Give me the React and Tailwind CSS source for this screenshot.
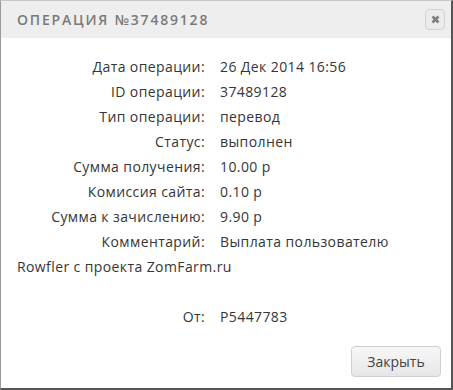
import React from "react";

const rows = [
  ["Дата операции:", "26 Дек 2014 16:56"],
  ["ID операции:", "37489128"],
  ["Тип операции:", "перевод"],
  ["Статус:", "выполнен"],
  ["Сумма получения:", "10.00 р"],
  ["Комиссия сайта:", "0.10 р"],
  ["Сумма к зачислению:", "9.90 р"],
  ["Комментарий:", "Выплата пользователю"],
];

export default function App() {
  return (
    <div
      className="w-[453px] h-[390px] bg-white border-l border-l-[#9a9a9a] border-t border-t-[#c8c8c8] border-r-2 border-r-[#555] border-b-2 border-b-[#555] flex flex-col text-[#333]"
      style={{ fontFamily: '"Open Sans", "Liberation Sans", sans-serif' }}
    >
      <div className="h-[37px] bg-[#eeeeee] flex items-center justify-between pl-[16px] pr-[6px] shrink-0">
        <div className="text-[14px] tracking-[1.8px] text-[#7a7a7a] uppercase font-semibold">
          Операция №37489128
        </div>
        <div className="w-[20px] h-[21px] rounded-[4px] border border-[#d2d2d2] bg-[#ebebeb] flex items-center justify-center">
          <svg width="9" height="9" viewBox="0 0 9 9">
            <path d="M1.5 1.5 L7.5 7.5 M7.5 1.5 L1.5 7.5" stroke="#7e7e7e" strokeWidth="2.6" strokeLinecap="butt" />
          </svg>
        </div>
      </div>
      <div className="pt-[16px] text-[14px] leading-[25px] font-medium tracking-[0.4px] text-[#353535]">
        {rows.map(([l, v]) => (
          <div key={l} className="flex">
            <div className="w-[205px] text-right pr-[1px]">{l}</div>
            <div className="pl-[14px]">{v}</div>
          </div>
        ))}
        <div className="pl-[16px]">Rowfler с проекта ZomFarm.ru</div>
        <div className="h-[25px]" />
        <div className="flex">
          <div className="w-[205px] text-right pr-[1px]">От:</div>
          <div className="pl-[14px]">P5447783</div>
        </div>
      </div>
      <div className="flex-1" />
      <div className="flex justify-end pr-[10px] pb-[11px]">
        <button className="w-[90px] h-[31px] rounded-[4px] border border-[#cfcfcf] bg-gradient-to-b from-[#f7f7f7] to-[#e6e6e6] text-[14px] text-[#444]">
          Закрыть
        </button>
      </div>
    </div>
  );
}
